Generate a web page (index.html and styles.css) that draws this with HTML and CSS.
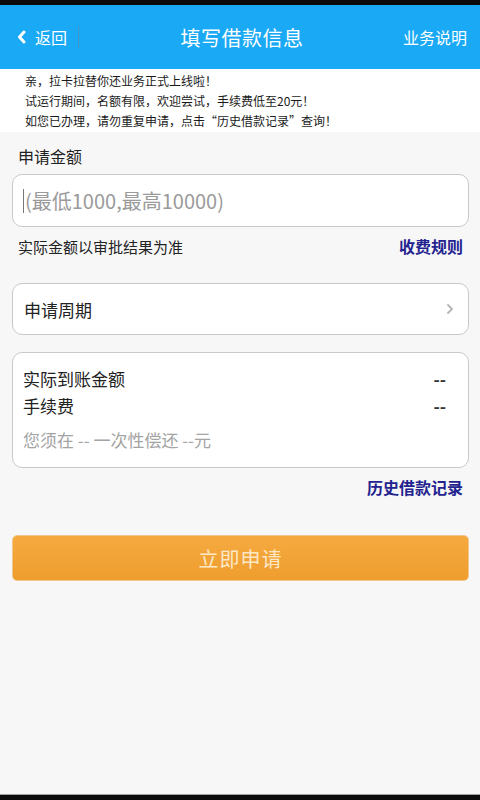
FILE: index.html
```html
<!DOCTYPE html>
<html lang="zh-CN">
<head>
  <meta charset="UTF-8">
  <meta name="viewport" content="width=device-width, initial-scale=1.0">
  <title>填写借款信息</title>
  <link rel="stylesheet" href="styles.css">
</head>
<body>
  <div class="status-bar"></div>

  <header class="topbar">
    <a class="back" href="#">
      <svg width="10" height="14" viewBox="0 0 10 14"><path d="M7 2 L2.5 7 L7 12" fill="none" stroke="#fff" stroke-width="3" stroke-linecap="round" stroke-linejoin="round"/></svg>
      <span>返回</span>
    </a>
    <h1>填写借款信息</h1>
    <a class="help" href="#">业务说明</a>
  </header>

  <div class="notice">
    <p>亲，拉卡拉替你还业务正式上线啦！</p>
    <p>试运行期间，名额有限，欢迎尝试，手续费低至20元！</p>
    <p>如您已办理，请勿重复申请，点击“历史借款记录”查询！</p>
  </div>

  <main class="content">
    <label class="field-label" for="amount">申请金额</label>
    <div class="box input-box">
      <span class="caret"></span>
      <input type="text" id="amount" placeholder="(最低1000,最高10000)">
    </div>
    <div class="note-row">
      <span>实际金额以审批结果为准</span>
      <a href="#">收费规则</a>
    </div>

    <div class="box period">
      <span>申请周期</span>
      <svg width="8" height="12" viewBox="0 0 8 12"><path d="M2 2 L6 6 L2 10" fill="none" stroke="#b4b4b4" stroke-width="1.8" stroke-linecap="round"/></svg>
    </div>

    <div class="box summary">
      <div class="sum-row"><span>实际到账金额</span><span class="dash">--</span></div>
      <div class="sum-row"><span>手续费</span><span class="dash">--</span></div>
      <p class="repay">您须在 -- 一次性偿还 --元</p>
    </div>

    <div class="link-row"><a href="#">历史借款记录</a></div>

    <button class="submit" type="button">立即申请</button>
  </main>

  <div class="nav-bar"></div>
</body>
</html>
```

FILE: styles.css
```css
/* Reset */
* {
  margin: 0;
  padding: 0;
  box-sizing: border-box;
}

body {
  font-family: "Noto Sans CJK SC", "Noto Sans", sans-serif;
  background: #f7f7f7;
  color: #222;
  width: 480px;
  height: 800px;
  display: flex;
  flex-direction: column;
}

a {
  text-decoration: none;
}

.status-bar {
  height: 5px;
  background: #0b0b0b;
}

/* Top bar */
.topbar {
  height: 64px;
  background: #1aa9f4;
  color: #fff;
  display: grid;
  grid-template-columns: 1fr auto 1fr;
  align-items: center;
  padding: 0 13px 0 17px;
}

.topbar h1 {
  font-size: 20px;
  font-weight: normal;
  letter-spacing: 0.5px;
}

.back {
  display: flex;
  align-items: center;
  gap: 8px;
  color: #fff;
  font-size: 16px;
  justify-self: start;
  padding-right: 11px;
  border-right: 1px solid #3f95c4;
  height: 22px;
}

.help {
  color: #fff;
  font-size: 16px;
  justify-self: end;
}

/* Notice */
.notice {
  background: #fff;
  height: 63px;
  padding: 2px 0 0 25px;
  font-size: 12px;
  line-height: 20px;
  color: #1a1a1a;
}

/* Form */
.content {
  padding: 12px 11px 0 12px;
  display: flex;
  flex-direction: column;
}

.field-label {
  font-size: 16px;
  line-height: 24px;
  padding-left: 6px;
  margin-bottom: 6px;
  color: #222;
}

.box {
  background: #fff;
  border: 1px solid #c9c9c9;
  border-radius: 10px;
}

.input-box {
  height: 53px;
  display: flex;
  align-items: center;
  padding-left: 10px;
}

.caret {
  width: 1px;
  height: 24px;
  background: #777;
}

.input-box input {
  border: none;
  outline: none;
  background: transparent;
  font-family: inherit;
  font-size: 20px;
  flex: 1;
  padding-left: 1px;
}

.input-box input::placeholder {
  color: #9a9a9a;
}

.note-row {
  display: flex;
  justify-content: space-between;
  align-items: center;
  height: 38px;
  padding: 0 6px;
  font-size: 15px;
  margin-bottom: 18px;
}

.note-row a,
.link-row a {
  color: #23238f;
  font-weight: bold;
  font-size: 16px;
}

.period {
  height: 52px;
  display: flex;
  align-items: center;
  justify-content: space-between;
  padding: 0 14px 0 11px;
  font-size: 17px;
  margin-bottom: 17px;
}

.summary {
  height: 116px;
  padding: 12px 22px 0 10px;
}

.sum-row {
  display: flex;
  justify-content: space-between;
  font-size: 17px;
  line-height: 27px;
}

.dash {
  font-weight: bold;
  color: #333;
}

.repay {
  margin-top: 8px;
  font-size: 17px;
  color: #a4a4a4;
}

.link-row {
  display: flex;
  justify-content: flex-end;
  height: 38px;
  align-items: center;
  padding-right: 6px;
  margin-bottom: 29px;
}

.submit {
  height: 46px;
  border: 1px solid #efc890;
  border-radius: 5px;
  background: linear-gradient(#f5aa40, #ef9d2e);
  color: #fde8c6;
  font-family: inherit;
  font-size: 20px;
  letter-spacing: 1px;
}

.nav-bar {
  margin-top: auto;
  height: 6px;
  background: #0b0b0b;
  border-top: 1px solid #a0a0a0;
}
```
